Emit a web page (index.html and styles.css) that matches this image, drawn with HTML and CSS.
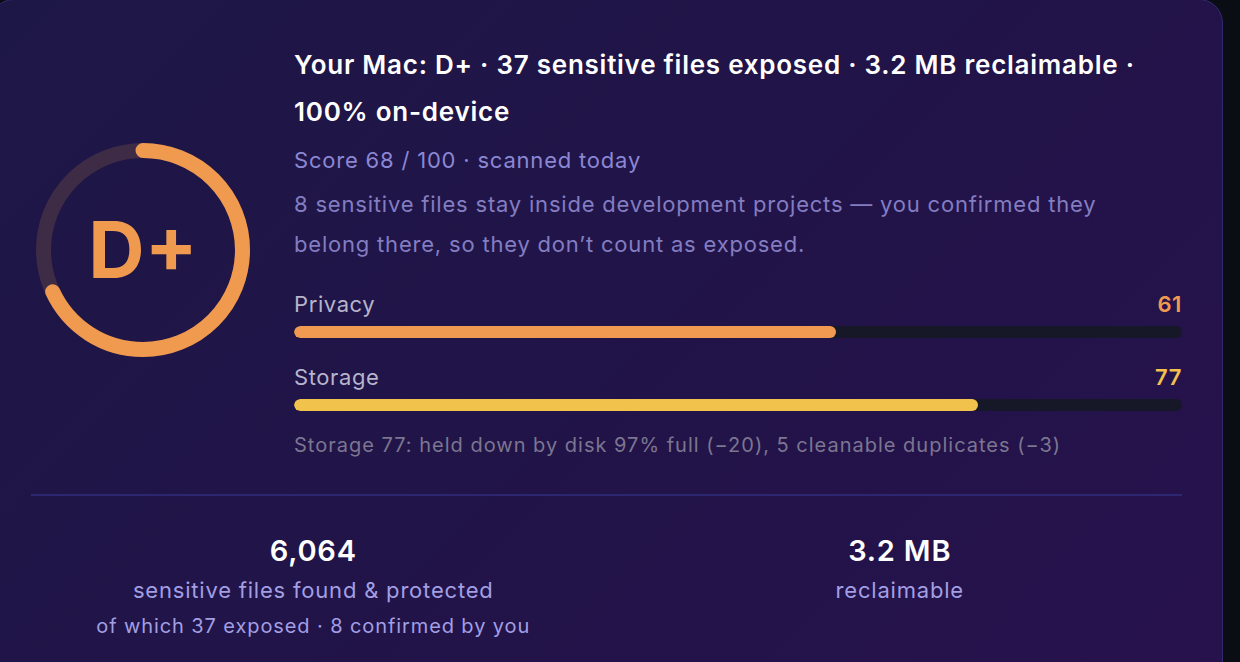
FILE: index.html
```html
<!DOCTYPE html>
<html lang="en">
<head>
<meta charset="utf-8">
<title>Mac score</title>
<link rel="stylesheet" href="styles.css">
</head>
<body>
<div class="card">
  <div class="top">
    <div class="ring">
      <svg width="214" height="214" viewBox="0 0 214 214">
        <circle cx="107" cy="107" r="99.5" fill="none" stroke="#3e2b46" stroke-width="15"/>
        <circle cx="107" cy="107" r="99.5" fill="none" stroke="#ef9a4f" stroke-width="15" stroke-linecap="round" stroke-dasharray="425.1 625.2" transform="rotate(-90 107 107)"/>
      </svg>
      <span class="grade">D+</span>
    </div>
    <div class="info">
      <h1 class="headline">Your Mac: D+ · 37 sensitive files exposed · 3.2 MB reclaimable · 100% on-device</h1>
      <p class="score">Score 68 / 100 · scanned today</p>
      <p class="desc">8 sensitive files stay inside development projects — you confirmed they belong there, so they don’t count as exposed.</p>
      <div class="metric">
        <div class="metric-row"><span class="metric-label">Privacy</span><span class="metric-val privacy">61</span></div>
        <div class="track"><div class="fill fill-privacy" style="width:61%"></div></div>
      </div>
      <div class="metric">
        <div class="metric-row"><span class="metric-label">Storage</span><span class="metric-val storage">77</span></div>
        <div class="track"><div class="fill fill-storage" style="width:77%"></div></div>
      </div>
      <p class="note">Storage 77: held down by disk 97% full (−20), 5 cleanable duplicates (−3)</p>
    </div>
  </div>
  <div class="divider"></div>
  <div class="stats">
    <div class="stat">
      <div class="stat-num">6,064</div>
      <div class="stat-label">sensitive files found &amp; protected</div>
      <div class="stat-sub">of which 37 exposed · 8 confirmed by you</div>
    </div>
    <div class="stat">
      <div class="stat-num">3.2 MB</div>
      <div class="stat-label">reclaimable</div>
    </div>
  </div>
</div>
</body>
</html>
```

FILE: styles.css
```css
* { box-sizing: border-box; }
html, body {
  margin: 0;
  padding: 0;
  height: 100%;
  overflow: hidden;
}
body {
  background: #0b0d14;
  font-family: Inter, "Noto Sans", "DejaVu Sans", sans-serif;
}
.card {
  margin: -1px 0 0 -10px;
  width: 1233px;
  height: 700px;
  border: 1px solid #31296e;
  border-radius: 24px;
  background: linear-gradient(135deg, #1d1746 0%, #221349 60%, #28124d 100%);
  padding: 41px 40px 0 40px;
}
.top {
  display: flex;
  align-items: flex-start;
  gap: 44px;
}
.ring {
  position: relative;
  width: 214px;
  height: 214px;
  margin: 102px 0 0 5px;
  flex: none;
}
.ring svg {
  display: block;
}
.grade {
  position: absolute;
  inset: 0;
  display: flex;
  align-items: center;
  justify-content: center;
  color: #ef9a4f;
  font-size: 78px;
  font-weight: 700;
  padding-bottom: 2px;
}
.info {
  flex: 1;
  min-width: 0;
}
.headline {
  margin: 0;
  color: #ffffff;
  font-size: 26px;
  font-weight: 600;
  letter-spacing: 0.75px;
  line-height: 47px;
}
.score {
  margin: 10px 0 0;
  color: #8b87d4;
  font-size: 22px;
  letter-spacing: 0.8px;
  line-height: 30px;
}
.desc {
  margin: 9px 0 0;
  max-width: 860px;
  color: #837dc2;
  font-size: 22px;
  letter-spacing: 0.8px;
  line-height: 40px;
}
.metric {
  margin-top: 25px;
}
.metric + .metric {
  margin-top: 24px;
}
.metric-row {
  display: flex;
  justify-content: space-between;
  align-items: center;
  font-size: 22px;
  letter-spacing: 0.6px;
  line-height: 30px;
}
.metric-label {
  color: #b7b4cb;
}
.metric-val {
  font-weight: 600;
}
.privacy { color: #ef9a50; }
.storage { color: #f1c24c; }
.track {
  margin-top: 7px;
  height: 12px;
  border-radius: 6px;
  background: #161828;
  overflow: hidden;
}
.fill {
  height: 100%;
  border-radius: 6px;
}
.fill-privacy { background: #ef9a50; }
.fill-storage { background: #f1c24c; }
.note {
  margin: 19px 0 0;
  color: #7c7690;
  font-size: 20px;
  letter-spacing: 1px;
  line-height: 30px;
}
.divider {
  margin: 34px 0 0 0;
  height: 2px;
  background: #2c2770;
}
.stats {
  display: grid;
  grid-template-columns: 1fr 1fr;
  gap: 22px;
  margin: 37px 0 0 0;
}
.stat {
  text-align: center;
}
.stat-num {
  color: #ffffff;
  font-size: 29px;
  font-weight: 600;
  letter-spacing: 0.8px;
  line-height: 36px;
}
.stat-label {
  margin-top: 3px;
  color: #a29fe4;
  font-size: 22px;
  letter-spacing: 0.8px;
  line-height: 36px;
}
.stat-sub {
  color: #a29fe4;
  font-size: 20px;
  letter-spacing: 0.9px;
  line-height: 37px;
}
```
